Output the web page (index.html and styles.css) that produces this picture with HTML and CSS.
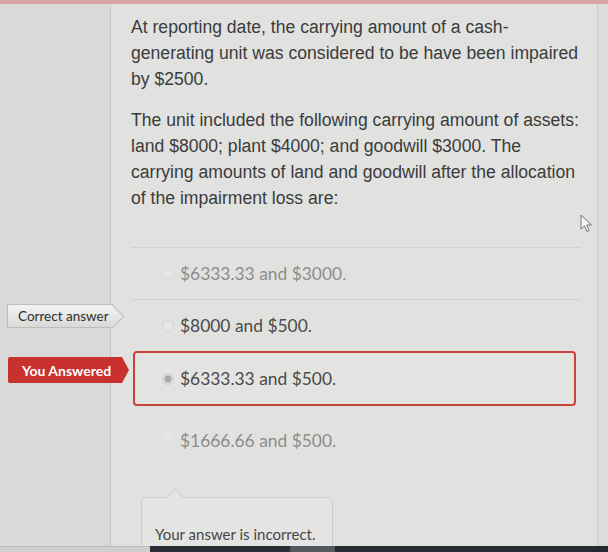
FILE: index.html
```html
<!DOCTYPE html>
<html>
<head>
<meta charset="utf-8">
<link rel="stylesheet" href="styles.css">
</head>
<body>
<div class="screen">
  <div class="topbar"></div>
  <div class="layout">
    <aside class="side"></aside>
    <main class="main">
      <div class="question">
        <p>At reporting date, the carrying amount of a cash-generating unit was considered to be have been impaired by $2500.</p>
        <p>The unit included the following carrying amount of assets: land $8000; plant $4000; and goodwill $3000. The carrying amounts of land and goodwill after the allocation of the impairment loss are:</p>
      </div>
      <div class="answers">
        <div class="answer faded"><span class="radio"></span><span class="atext">$6333.33 and $3000.</span></div>
        <div class="answer"><span class="label correct">Correct answer</span><span class="radio"></span><span class="atext">$8000 and $500.</span></div>
        <div class="answer chosen"><span class="label wrong">You Answered</span><span class="radio checked"></span><span class="atext">$6333.33 and $500.</span></div>
        <div class="answer faded last"><span class="radio"></span><span class="atext">$1666.66 and $500.</span></div>
      </div>
      <div class="feedback">
        <span class="caret"></span>
        <p>Your answer is incorrect.</p>
      </div>
    </main>
    <div class="gutter"></div>
  </div>
  <div class="taskbar"><span class="tb-a"></span><span class="tb-b"></span><span class="tb-c"></span></div>
  <svg class="cursor" width="14" height="20" viewBox="0 0 14 20"><path d="M1 1 L1 15 L4.5 11.8 L7 17.5 L9.2 16.5 L6.8 11 L11.5 11 Z" fill="#f4f4f4" stroke="#777" stroke-width="1"/></svg>
</div>
</body>
</html>
```
FILE: styles.css
```css
* { box-sizing: border-box; }
html, body { margin: 0; padding: 0; }
body { width: 608px; height: 552px; overflow: hidden; background: #dfe0de; }
.screen { position: relative; width: 608px; height: 552px; overflow: hidden; display: flex; flex-direction: column; }
.topbar { height: 4px; background: #d9a3a6; flex: none; }
.layout { flex: 1; display: flex; min-height: 0; }
.side { width: 111px; flex: none; background: #d9dad8; border-right: 1px solid #c4c5c3; }
.main { flex: 1; background: #e1e2e0; padding: 10px 18px 0 20px; min-width: 0; }
.gutter { width: 11px; flex: none; background: #dcdddb; border-left: 1px solid #c9cac8; }
.question { font-family: "Liberation Sans", Arial, sans-serif; font-size: 17.6px; line-height: 26px; color: #3b3b3b; width: 452px; }
.question p { margin: 0 0 15px 0; }
.answers { margin-top: 36px; width: 450px; }
.answer { position: relative; display: flex; align-items: center; height: 52px; border-top: 1px solid #d2d3d1; padding-left: 31px; font-family: Lato, "Open Sans", sans-serif; font-size: 17.4px; color: #4a4a4a; }
.answer.faded { color: #8c8d8b; }
.answer.chosen { height: 55px; border: 2px solid #c9433d; border-radius: 4px; margin-left: 2px; margin-right: 5px; padding-left: 27px; background: #e3e3e1; }
.answer.chosen + .answer { border-top: none; }
.answer.last { height: 70px; align-items: flex-start; padding-top: 24px; }
.radio { width: 12px; height: 12px; border-radius: 50%; border: 1px solid #d2d3d1; background: #e6e7e5; margin-right: 6px; flex: none; }
.radio.checked { border-color: #cfcfcf; background: radial-gradient(circle, #a9aaa8 0 3px, #dcdcda 4px); }
.faded .radio { border-color: #dcdddb; }
.label { position: absolute; z-index: 1; display: flex; align-items: center; font-family: Lato, "Open Sans", sans-serif; white-space: nowrap; }
.label.correct { left: -124px; top: 4px; width: 106px; height: 24px; padding-left: 10px; font-size: 13.5px; background: linear-gradient(#f3f3f1, #d9d9d7); color: #2f2f2f; border: 1px solid #bdbdbb; border-right: none; border-radius: 2px 0 0 2px; }
.label.correct::after { content: ""; position: absolute; z-index: -1; right: -8px; top: 3px; width: 16px; height: 16px; background: linear-gradient(135deg, #f3f3f1, #d9d9d7); border-top: 1px solid #bdbdbb; border-right: 1px solid #bdbdbb; transform: rotate(45deg); }
.label.wrong { left: -127px; top: 4px; width: 114px; height: 26px; padding-left: 14px; font-size: 14px; background: #c8312d; color: #fff; font-weight: 700; border-radius: 2px 0 0 2px; }
.label.wrong::after { content: ""; position: absolute; right: -7px; top: 0; border-left: 7px solid #c8312d; border-top: 13px solid transparent; border-bottom: 13px solid transparent; }
.feedback { position: relative; margin-top: 21px; margin-left: 10px; width: 192px; height: 70px; border: 1px solid #cdcecc; border-radius: 4px; background: #e4e5e3; padding: 27px 0 0 13px; }
.feedback p { margin: 0; font-family: Lato, "Open Sans", sans-serif; font-size: 15px; color: #454545; }
.caret { position: absolute; left: 27px; top: -7px; width: 12px; height: 12px; background: #e4e5e3; border-top: 1px solid #cdcecc; border-left: 1px solid #cdcecc; transform: rotate(45deg); }
.taskbar { position: absolute; left: 0; right: 0; bottom: 0; height: 6px; display: flex; }
.tb-a { width: 150px; background: #cfd0ce; border-top: 1px solid #bbb; }
.tb-b { width: 140px; background: #2b2e35; }
.tb-c { width: 45px; background: #54575c; }
.taskbar::after { content: ""; flex: 1; background: #262a31; }
.cursor { position: absolute; left: 580px; top: 214px; }
```
